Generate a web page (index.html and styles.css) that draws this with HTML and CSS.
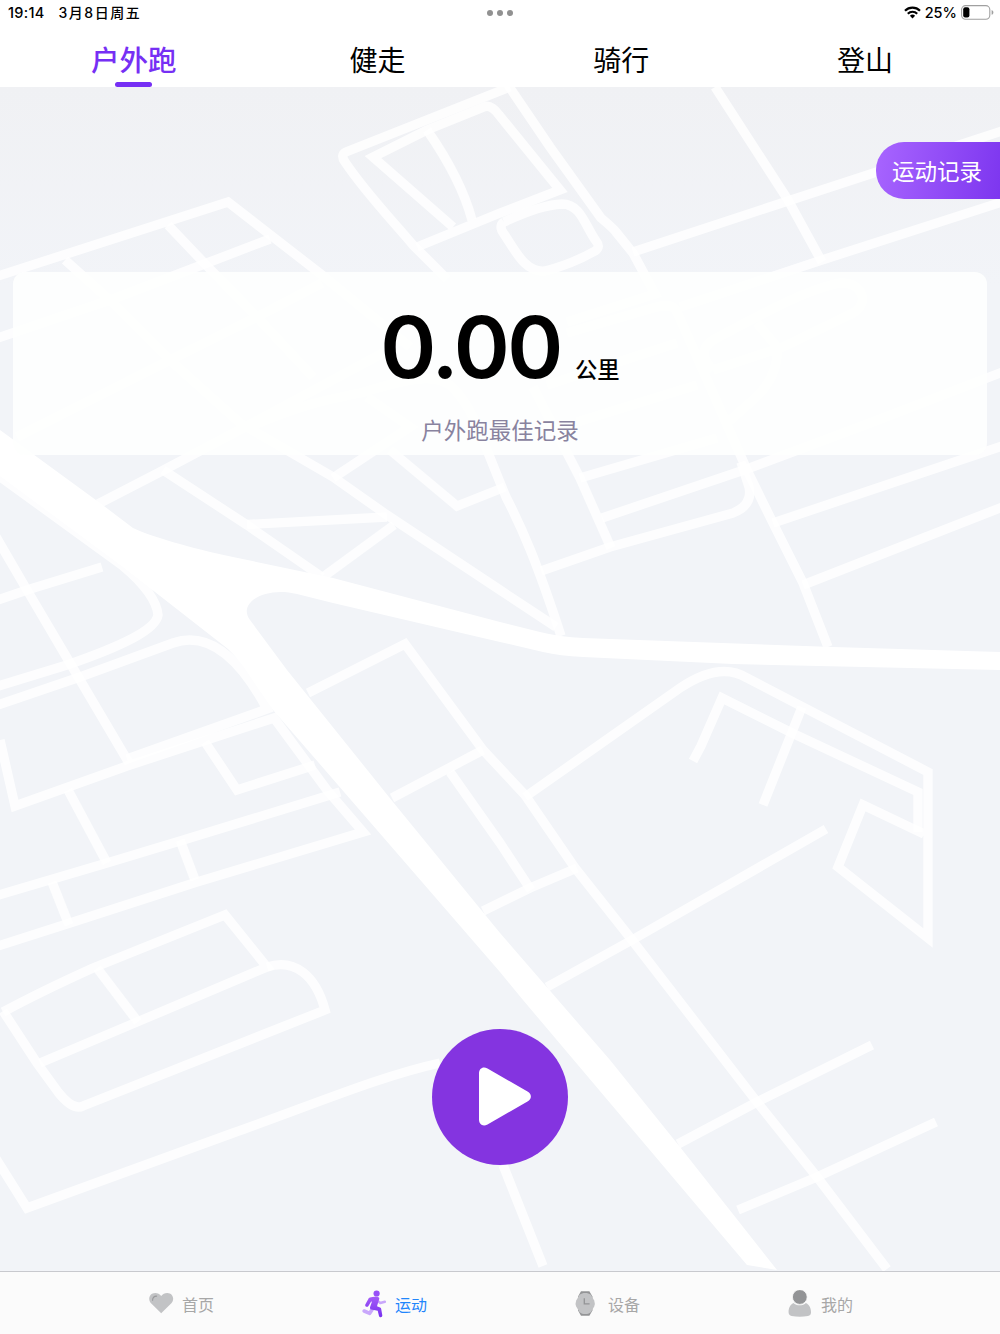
FILE: index.html
```html
<!DOCTYPE html>
<html lang="zh-CN">
<head>
  <meta charset="UTF-8" />
  <meta name="viewport" content="width=device-width, initial-scale=1.0"/>
  <title>运动</title>
  <link rel="stylesheet" href="styles.css">
</head>
<body>
  <header class="header">
    <div class="status">
      <div class="status-left"><span class="time">19:14</span><span class="date">3月8日周五</span></div>
      <div class="dots"><i></i><i></i><i></i></div>
      <div class="status-right">
        <svg class="wifi" viewBox="0 0 17 13">
          <g fill="none" stroke="#000" stroke-width="2.2">
            <path d="M1 4.7a10.6 10.6 0 0 1 15 0"/>
            <path d="M3.8 7.7a6.6 6.6 0 0 1 9.4 0"/>
          </g>
          <path d="M8.5 12.4 5.9 9.8a3.7 3.7 0 0 1 5.2 0z"/>
        </svg>
        <span class="percent">25%</span>
        <svg class="battery" viewBox="0 0 33 15">
          <rect x=".6" y=".6" width="28.2" height="13.6" rx="4" fill="none" stroke="#a0a0a0" stroke-width="1.1"/>
          <rect x="2.2" y="2.3" width="6.2" height="10.2" rx="2"/>
          <path d="M30.6 5v4.8c1.1-.4 1.8-1.3 1.8-2.4s-.7-2-1.8-2.4z" fill="#a0a0a0"/>
        </svg>
      </div>
    </div>
    <nav class="tabs">
      <a class="tab active">户外跑</a>
      <a class="tab">健走</a>
      <a class="tab">骑行</a>
      <a class="tab">登山</a>
    </nav>
  </header>

  <main class="main">
    <svg class="map" viewBox="0 87 1000 1184">
      <g class="street">
        <!-- north west -->
        <path d="M-5 277 228 202 322 275 410 347"/>
        <path d="M65 260 113 303 170 360 240 423 333 477 387 515 500 590 556 627"/>
        <path d="M168 225 207 266 257 317 313 377"/>
        <path d="M270 239 207 263 113 299-5 339"/>
        <path d="M322 283 257 317 170 360 17 437"/>
        <path d="M383 353 247 426 160 472 98 504"/>
        <path d="M247 428C300 405 325 400 360 393C395 383 437 368 455 390C475 412 480 435 506 497C522 528 537 562 561 636"/>
        <path d="M367 397 410 427 333 478"/>
        <path d="M390 450 457 506 505 487"/>
        <path d="M163 470 247 525 322 577"/>
        <path d="M247 524.500 387 517"/>
        <path d="M394 525 323 577"/>
        <!-- north -->
        <path d="M510 87 346 152Q340 155 345 162C365 192 392 220 413 245L447 279"/>
        <path d="M453 227 373 157 427 130 484 107Q491 104 499 115L560 190 500 213 417 247"/>
        <path d="M427 130C450 163 464 190 472 220"/>
        <path d="M508 85 550 147 601 218Q613 228 616 232L633 253 655 294 567 322"/>
        <path d="M504 222Q498 226 504 234C515 250 525 273 545 271Q570 265 595 251Q601 247 596 241C585 226 581 204 562 204Q540 205 504 222"/>
        <path d="M567 333 653 308Q673 302 677 312L697 357 747 470 773 523 803 583 828 647"/>
        <path d="M715 87 788 200 822 262"/>
        <path d="M633 252 788 201 1005 130"/>
        <path d="M1005 201 822 260 680 307"/>
        <path d="M677 343 547 385"/>
        <path d="M697 385 577 422"/>
        <path d="M717 438 580 478"/>
        <path d="M533 387 580 478 611 548"/>
        <path d="M602 518 747 469 870 423 1005 371"/>
        <path d="M541 571 610 547 733 513Q753 505 749 487L741 462"/>
        <path d="M773 523 1005 445"/>
        <path d="M803 585 1005 506"/>
        <path d="M757 323 777 347Q779 377 753 400L727 423"/>
        <path d="M713 370 783 347 853 313C872 302 860 278 835 284C800 292 755 318 713 340Q695 352 713 370"/>
        <!-- west -->
        <path d="M-5 535 27 590 70 663 129 763"/>
        <path d="M102 567 27 590-5 601"/>
        <path d="M-5 473 123 566C145 584 157 602 158 615C156 629 125 645 67 665L-5 687"/>
        <path d="M-5 706 80 677 173 643C205 632 237 653 267 709L127 759"/>
        <path d="M0 740 15 806 127 766 274 718 327 790 363 832 197 882 70 923-5 947"/>
        <path d="M205 742 237 790 315 765"/>
        <path d="M340 792 180 841 107 863-5 896"/>
        <path d="M68 790 107 863"/>
        <path d="M180 840 195 880"/>
        <path d="M52 882 69 925"/>
        <path d="M3 1012Q40 992 93 968L225 915 267 967 137 1022 40 1063"/>
        <path d="M97 968 138 1022"/>
        <path d="M267 967C295 958 316 976 325 1010L83 1106Q73 1111 58 1092L37 1063 3 1011"/>
        <path d="M-5 1157 27 1208 233 1133C310 1106 380 1076 440 1063"/>
        <path d="M503 1165 543 1266"/>
        <!-- south east -->
        <path d="M308 693 405 644 483 750 525 795 575 868 632 940 757 1102 817 1177 887 1269"/>
        <path d="M392 798 483 750"/>
        <path d="M450 772 500 843 531 890"/>
        <path d="M483 911 530 888 577 868"/>
        <path d="M525 797 680 688Q720 661 747 678L928 772V938L838 867 863 805 924 834"/>
        <path d="M693 761 701 746 722 698 792 733 918 792V832"/>
        <path d="M802 707 763 805"/>
        <path d="M547 987 632 940 826 829"/>
        <path d="M678 1144 757 1102 872 1045"/>
        <path d="M738 1210 817 1177 936 1122"/>
      </g>
      <path class="highway" d="M0 430 100 503 133 528C150 536 190 548 233 557L333 578 500 622 540 632Q560 637 583 638L833 647 1000 652V670L733 664 583 657Q560 656 543 652L500 642 333 603 297 594C265 586 237 603 250 620L287 670 393 802 500 933 610 1060 680 1147 777 1270 747 1265 523 1000 500 972 273 710 243 666Q238 659 228 649L123 567 0 476Z"/>
    </svg>

    <a class="history">运动记录</a>

    <section class="card">
      <div class="distance"><span class="number">0.00</span><span class="unit">公里</span></div>
      <p class="caption">户外跑最佳记录</p>
    </section>

    <button class="start" aria-label="开始">
      <svg viewBox="0 0 136 136">
        <path d="M47 44.500C47 39.500 51 37 55.500 39.500L95.500 62.500C100 65 100 70 95.500 72.500L55.500 95.500C51 98 47 95.500 47 90.500Z"/>
      </svg>
    </button>
  </main>

  <footer class="tabbar">
    <a class="item">
      <svg class="icon" viewBox="0 0 26 28">
        <path d="M12.200 23.300 1.800 13C-1.400 9.300.4 2.900 6.200 2.900c2.500 0 4.500 1 6 3.100 1.500-2.100 3.500-3.100 6-3.100 5.800 0 7.600 6.400 4.400 10.100z" fill="#c2c3c5"/>
        <path d="M3.600 10.300c0-2.500 1.500-4.100 4-4.200" fill="none" stroke="#98999b" stroke-width="1.100" stroke-linecap="round"/>
      </svg>
      <span>首页</span>
    </a>
    <a class="item active">
      <svg class="icon" viewBox="0 0 26 28">
        <defs>
          <linearGradient id="run" x1="0" y1="0" x2="0" y2="1">
            <stop offset="0" stop-color="#a45cf8"/>
            <stop offset="1" stop-color="#7730ee"/>
          </linearGradient>
        </defs>
        <g fill="none" stroke="#c9a7fb" stroke-linecap="round" stroke-linejoin="round">
          <path d="M16 11.300 18.300 13 22.800 11.800" stroke-width="2.600"/>
          <path d="M2.200 21 7.700 23.300 10.300 19.300" stroke-width="3.600"/>
        </g>
        <circle cx="14.600" cy="3.500" r="3.100" fill="#9850f8"/>
        <path d="M8 7.600c2.800-.9 5.800-1 8.400-.3.900.3 1.100.9.800 1.600l-2.200 7.300 3.100 1.300c.7.300 1 .8 1.100 1.500l1.100 6.300c.3 2.200-2.800 2.700-3.300.7l-1.300-5.200-6.300-1.300c-1.200-.3-1.700-1.300-1.300-2.500l1.900-5.500-1 .3-2.600 4.200c-1.100 1.800-3.900.5-3.100-1.500L6.200 9.200c.3-.8.900-1.300 1.800-1.600z" fill="url(#run)"/>
      </svg>
      <span>运动</span>
    </a>
    <a class="item">
      <svg class="icon" viewBox="0 0 26 28">
        <path d="M6 1.200h8.400l3 5.300v14l-3 5.300H6l-3-5.300v-14z" fill="#939496"/>
        <path d="M4.600 4.800C7.500 2.300 12.900 2.300 15.800 4.800L19.200 10.500Q20.400 13.500 19.200 16.500L15.800 22.200C12.900 24.700 7.500 24.700 4.600 22.200L1.200 16.500Q0 13.500 1.200 10.500Z" fill="#c2c3c5"/>
        <path d="M9.300 8.300v5.600h5.300" fill="none" stroke="#939496" stroke-width="1.300"/>
      </svg>
      <span>设备</span>
    </a>
    <a class="item">
      <svg class="icon" viewBox="0 0 26 28">
        <path d="M5.500 13c2.800 3.100 9.600 3.100 12.400 0 3.700 1.700 5.200 5.600 5.100 9.600-.1 2.300-1.200 3-3 3.300-5.500 1-10.900 1-16.400 0C1.700 25.600.7 24.700.6 22.600.4 18.600 1.800 14.700 5.500 13z" fill="#c2c3c5"/>
        <circle cx="11.800" cy="7" r="7.400" fill="#939496" stroke="#fbfbfb" stroke-width=".8"/>
      </svg>
      <span>我的</span>
    </a>
  </footer>
</body>
</html>
```

FILE: styles.css
```css
* {
  box-sizing: border-box;
}

body {
  margin: 0;
  height: 1334px;
  display: flex;
  flex-direction: column;
  font-family: Inter, "Noto Sans CJK SC", sans-serif;
  background: #fff;
  color: #000;
  overflow: hidden;
}

.header {
  height: 87px;
  display: flex;
  flex-direction: column;
}

.status {
  height: 25px;
  padding: 0 7px 0 8px;
  display: grid;
  grid-template-columns: 478px auto 1fr;
  align-items: center;
  font-size: 14px;
  font-weight: 500;
  line-height: 25px;
}

.status-left {
  display: flex;
  gap: 14px;
}

.time {
  font-size: 14.5px;
  letter-spacing: 0.3px;
}

.date {
  letter-spacing: 1.5px;
}

.dots {
  display: flex;
  gap: 4px;
  padding-left: 1px;
}

.dots i {
  width: 6px;
  height: 6px;
  border-radius: 50%;
  background: #919191;
}

.status-right {
  display: flex;
  justify-content: flex-end;
  align-items: center;
  gap: 4px;
}

.percent {
  font-size: 14.5px;
}

.wifi {
  width: 17px;
  height: 13px;
}

.battery {
  width: 33px;
  height: 15px;
  margin-right: -1px;
}

.tabs {
  flex: 1;
  display: flex;
  padding: 0 13px 0 12px;
}

.tab {
  flex: 1;
  display: flex;
  flex-direction: column;
  align-items: center;
  font-family: "Noto Sans CJK SC", sans-serif;
  font-size: 28px;
  line-height: 40px;
  padding-top: 14px;
}

.tab.active {
  color: #762ff4;
  font-size: 28.5px;
  font-weight: 500;
}

.tab.active::after {
  content: "";
  width: 37px;
  height: 5px;
  margin-top: 3px;
  border-radius: 3px;
  background: #762ff4;
}

.main {
  position: relative;
  height: 1184px;
  display: flex;
  flex-direction: column;
  align-items: center;
  background: linear-gradient(#f0f1f4, #f2f4f8 200px);
}

.map {
  position: absolute;
  inset: 0;
  width: 100%;
  height: 100%;
}

.street path {
  fill: none;
  stroke: rgba(255, 255, 255, 0.82);
  stroke-width: 9.4;
}

.highway {
  fill: #fff;
}

.history,
.card,
.start {
  position: relative;
}

.history {
  align-self: flex-end;
  width: 124px;
  height: 57px;
  margin-top: 55px;
  padding-left: 16px;
  border-radius: 28px 0 0 28px;
  background: linear-gradient(100deg, #a865ff, #7d36ef);
  color: #fff;
  font-family: "Noto Sans CJK SC", sans-serif;
  font-size: 22.5px;
  line-height: 56px;
  white-space: nowrap;
}

.card {
  width: 974px;
  height: 183px;
  margin-top: 73px;
  padding-top: 32px;
  border-radius: 12px;
  background: rgba(254, 255, 254, 0.88);
  text-align: center;
}

.distance {
  height: 88px;
  display: flex;
  justify-content: center;
  align-items: baseline;
}

.number {
  font-size: 85px;
  font-weight: 600;
  line-height: 87px;
  letter-spacing: -2.5px;
}

.unit {
  margin-left: 14px;
  font-family: "Noto Sans CJK SC", sans-serif;
  font-size: 22.4px;
  font-weight: 500;
  line-height: 30px;
}

.caption {
  margin: 21px 0 0;
  color: #89839f;
  font-family: "Noto Sans CJK SC", sans-serif;
  font-size: 22.5px;
  line-height: 33px;
}

.start {
  width: 136px;
  height: 136px;
  margin-top: 574px;
  padding: 0;
  border: none;
  border-radius: 50%;
  background: #8434e0;
}

.start svg {
  display: block;
  fill: #fff;
}

.tabbar {
  height: 63px;
  padding: 2px 73px 0 75px;
  display: flex;
  border-top: 1px solid #c8c9ce;
  background: #fbfbfb;
}

.item {
  flex: 1;
  display: flex;
  justify-content: center;
  align-items: center;
  gap: 7px;
  color: #a7a7a7;
  font-family: "Noto Sans CJK SC", sans-serif;
  font-size: 16px;
}

.item.active {
  color: #1f86fb;
}

.icon {
  width: 26px;
  height: 28px;
}
```
